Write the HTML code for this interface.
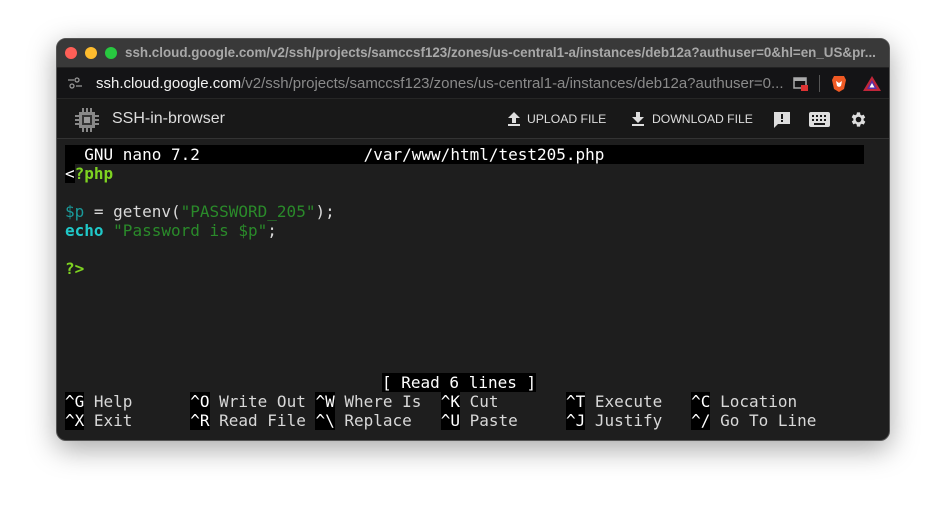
<!DOCTYPE html>
<html><head><style>
*{margin:0;padding:0;box-sizing:border-box}
body{width:946px;height:516px;background:#fff;position:relative;overflow:hidden;font-family:"Liberation Sans",sans-serif}
.win{position:absolute;left:56px;top:38px;width:834px;height:403px;border-radius:10px;overflow:hidden;background:#1e1e1e;box-shadow:0 8px 28px rgba(0,0,0,.35);border:1px solid #555}
.title{position:absolute;left:0;top:0;width:100%;height:28px;background:#393939;color:#a8a8a8;font-weight:bold;font-size:13.4px;line-height:28px;padding-left:68px;white-space:nowrap}
.dot{position:absolute;top:8px;width:12px;height:12px;border-radius:50%}
.addr{position:absolute;left:0;top:28px;width:100%;height:31px;background:#141416;border-top:1px solid #222;font-size:15px;line-height:31px;color:#8a8a8a;white-space:nowrap}
.tool{position:absolute;left:0;top:59px;width:100%;height:41px;background:#181818;border-top:1px solid #262626;border-bottom:1px solid #333;color:#ccc}
.term{position:absolute;left:8px;top:106px;font-family:"DejaVu Sans Mono",monospace;font-size:16px;line-height:19px;color:#d8d8d8;white-space:pre}
.r{position:absolute;left:0;height:19px}
.k{background:#000;color:#fff}
</style></head><body>
<div class="win">
 <div class="title">
  <div class="dot" style="left:8px;background:#fe5f57"></div>
  <div class="dot" style="left:28px;background:#febc2e"></div>
  <div class="dot" style="left:48px;background:#28c840"></div>
  ssh.cloud.google.com/v2/ssh/projects/samccsf123/zones/us-central1-a/instances/deb12a?authuser=0&amp;hl=en_US&amp;pr...
 </div>
 <div class="addr">
  <svg style="position:absolute;left:11px;top:9px" width="14" height="12" viewBox="0 0 14 12"><g stroke="#999" fill="none" stroke-width="1.3"><line x1="0" y1="3" x2="6" y2="3"/><circle cx="9" cy="3" r="2"/><line x1="8" y1="9" x2="14" y2="9"/><circle cx="4" cy="9" r="2"/></g></svg>
  <span style="position:absolute;left:39px"><span style="color:#f2f2f2">ssh.cloud.google.com</span>/v2/ssh/projects/samccsf123/zones/us-central1-a/instances/deb12a?authuser=0...</span>
  <svg style="position:absolute;left:736px;top:9px" width="15" height="14"><rect x="1" y="1" width="12" height="10" fill="none" stroke="#aaa" stroke-width="1.5"/><rect x="1" y="1" width="12" height="3" fill="#aaa"/><rect x="8" y="8" width="7" height="6" fill="#d33"/></svg>
  <div style="position:absolute;left:762px;top:7px;width:1px;height:17px;background:#555"></div>
  <svg style="position:absolute;left:774px;top:6px" width="16" height="18"><path d="M3 2h10l2 4-2 9-5 3-5-3-2-9z" fill="#f05a24"/><path d="M5 7l3 2 3-2-1 5-2 1-2-1z" fill="#fff"/></svg>
  <svg style="position:absolute;left:806px;top:8px" width="18" height="15"><path d="M9 0L18 15H0z" fill="#c0263a"/><path d="M9 4L14 13H4z" fill="#5a2ea6"/><path d="M9 7L11.5 11.5H6.5z" fill="#fff"/></svg>
 </div>
 <div class="tool">
  <svg style="position:absolute;left:17px;top:8px" width="26" height="26" viewBox="0 0 26 26"><g fill="#888"><rect x="5" y="5" width="16" height="16"/><rect x="8" y="1" width="2" height="4"/><rect x="12" y="1" width="2" height="4"/><rect x="16" y="1" width="2" height="4"/><rect x="8" y="21" width="2" height="4"/><rect x="12" y="21" width="2" height="4"/><rect x="16" y="21" width="2" height="4"/><rect x="1" y="8" width="4" height="2"/><rect x="1" y="12" width="4" height="2"/><rect x="1" y="16" width="4" height="2"/><rect x="21" y="8" width="4" height="2"/><rect x="21" y="12" width="4" height="2"/><rect x="21" y="16" width="4" height="2"/></g><rect x="8" y="8" width="10" height="10" fill="#333"/><rect x="10" y="10" width="6" height="6" fill="#999"/></svg>
  <span style="position:absolute;left:55px;top:11px;font-size:16px;color:#ddd">SSH-in-browser</span>
  <svg style="position:absolute;left:450px;top:12px" width="14" height="16"><path d="M7 1l6 6H9v5H5V7H1z" fill="#ddd"/><rect x="1" y="13" width="12" height="2" fill="#ddd"/></svg>
  <span style="position:absolute;left:470px;top:13px;font-size:12.2px;color:#ddd">UPLOAD FILE</span>
  <svg style="position:absolute;left:574px;top:12px" width="14" height="16"><path d="M7 12l6-6H9V1H5v5H1z" fill="#ddd"/><rect x="1" y="13" width="12" height="2" fill="#ddd"/></svg>
  <span style="position:absolute;left:595px;top:13px;font-size:12.2px;color:#ddd">DOWNLOAD FILE</span>
  <svg style="position:absolute;left:716px;top:12px" width="18" height="18"><path d="M1 1h16v12H5l-4 4z" fill="#ddd"/><rect x="8" y="3" width="2" height="5" fill="#181818"/><rect x="8" y="9" width="2" height="2" fill="#181818"/></svg>
  <svg style="position:absolute;left:752px;top:13px" width="21" height="15"><rect x="0" y="0" width="21" height="15" rx="2" fill="#ddd"/><g fill="#181818"><rect x="3" y="3" width="2" height="2"/><rect x="7" y="3" width="2" height="2"/><rect x="11" y="3" width="2" height="2"/><rect x="15" y="3" width="2" height="2"/><rect x="3" y="7" width="2" height="2"/><rect x="7" y="7" width="2" height="2"/><rect x="11" y="7" width="2" height="2"/><rect x="15" y="7" width="2" height="2"/><rect x="5" y="11" width="11" height="2"/></g></svg>
  <svg style="position:absolute;left:792px;top:11px" width="19" height="19" viewBox="0 0 24 24"><path fill="#ddd" d="M19.4 13a7.5 7.5 0 000-2l2.1-1.6-2-3.5-2.5 1a7 7 0 00-1.7-1L15 3h-4l-.4 2.6a7 7 0 00-1.7 1l-2.5-1-2 3.5L6.6 11a7.5 7.5 0 000 2l-2.1 1.6 2 3.5 2.5-1a7 7 0 001.7 1L11 21h4l.4-2.6a7 7 0 001.7-1l2.5 1 2-3.5zM13 15.5a3.5 3.5 0 110-7 3.5 3.5 0 010 7z" transform="translate(-1 0)"/></svg>
 </div>
 <div class="term">
  <div class="r k" style="top:0;width:799px">  GNU nano 7.2                 /var/www/html/test205.php</div>
  <div class="r" style="top:19px"><span class="k">&lt;</span><b style="color:#7ed321">?php</b></div>
  <div class="r" style="top:57px"><span style="color:#1a9a9a">$p</span> = getenv(<span style="color:#2a8a2a">"PASSWORD_205"</span>);</div>
  <div class="r" style="top:76px"><b style="color:#20c8c8">echo</b> <span style="color:#2a8a2a">"Password is $p"</span>;</div>
  <div class="r" style="top:114px"><b style="color:#7ed321">?&gt;</b></div>
  <div class="r" style="top:228px;left:317px"><span class="k">[ Read 6 lines ]</span></div>
  <div class="r" style="top:247px"><span class="k">^G</span> Help      <span class="k">^O</span> Write Out <span class="k">^W</span> Where Is  <span class="k">^K</span> Cut       <span class="k">^T</span> Execute   <span class="k">^C</span> Location</div>
  <div class="r" style="top:266px"><span class="k">^X</span> Exit      <span class="k">^R</span> Read File <span class="k">^\</span> Replace   <span class="k">^U</span> Paste     <span class="k">^J</span> Justify   <span class="k">^/</span> Go To Line</div>
 </div>
</div>
</body></html>
